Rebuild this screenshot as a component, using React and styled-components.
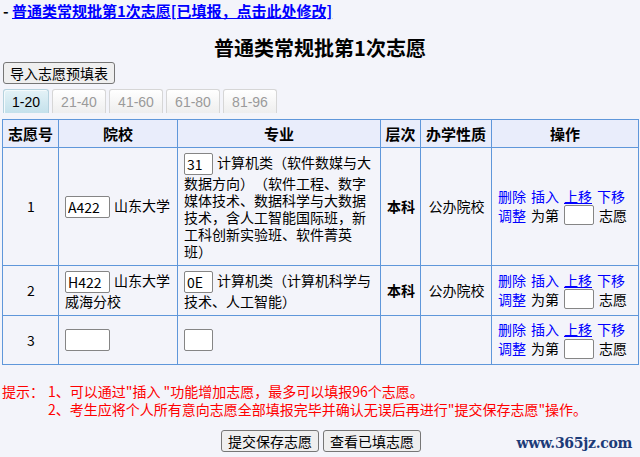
import React from "react";
import styled, { createGlobalStyle, css } from "styled-components";

const GlobalStyle = createGlobalStyle`
  html, body {
    margin: 0;
    padding: 0;
    background: #f3f4fa;
  }
  body {
    font-family: "Noto Sans CJK SC", "Liberation Sans", sans-serif;
    font-size: 14px;
    color: #000;
    text-spacing-trim: space-all;
  }
`;

const Page = styled.div`
  position: relative;
  width: 640px;
  height: 457px;
  overflow: hidden;
`;

const TopLine = styled.div`
  padding-left: 3px;
  height: 21px;
  line-height: 21px;
  font-size: 15px;
  font-weight: bold;
  white-space: nowrap;
`;

const TopLink = styled.a`
  color: #0000ff;
  text-decoration: underline;
  cursor: pointer;
`;

const Title = styled.h2`
  margin: 15px 0 0;
  height: 24px;
  line-height: 24px;
  text-align: center;
  font-size: 20px;
  font-weight: bold;
`;

const Toolbar = styled.div`
  margin-top: 2px;
  padding-left: 3px;
  display: flex;
`;

const PlainButton = styled.button`
  height: 22px;
  box-sizing: border-box;
  padding: 0 6px;
  border: 1px solid #767676;
  border-radius: 3px;
  background: #efefef;
  font-family: "Noto Sans CJK SC", sans-serif;
  font-size: 14px;
  line-height: 18px;
  color: #000;
`;

const Tabs = styled.div`
  display: flex;
  gap: 3px;
  margin-top: 5px;
  padding-left: 3px;
  height: 24px;
`;

const Tab = styled.div`
  box-sizing: border-box;
  width: ${(p) => p.$w}px;
  height: 24px;
  display: flex;
  align-items: center;
  justify-content: center;
  border: 1px solid #d6d6d6;
  border-bottom: none;
  border-radius: 3px 3px 0 0;
  background: linear-gradient(#ffffff, #eeeeee);
  color: #9a9a9a;
  font-family: "Liberation Sans", sans-serif;
  font-size: 14px;
  ${(p) =>
    p.$active &&
    css`
      border-color: #b5d2de;
      background: linear-gradient(#e4f2f7, #c4e1eb);
      color: #000;
      box-shadow: inset 1px 1px 0 #f4fafc;
    `}
`;

const Grid = styled.table`
  margin: 6px 0 0 2px;
  width: 636px;
  table-layout: fixed;
  border-collapse: collapse;
  font-size: 14px;
`;

const Head = styled.th`
  height: 27px;
  padding: 0;
  border: 1px solid #5f97da;
  background: #e9edfb;
  font-size: 15px;
  font-weight: bold;
  text-align: center;
`;

const Cell = styled.td`
  padding: 5px 5px 5px 6px;
  border: 1px solid #5f97da;
  vertical-align: middle;
  text-align: ${(p) => p.$align || "left"};
  line-height: 17px;
  font-weight: ${(p) => (p.$bold ? "bold" : "normal")};
  word-break: break-all;
`;

const CodeBox = styled.input`
  box-sizing: border-box;
  width: ${(p) => p.$w}px;
  height: 22px;
  padding: 1px 2px;
  margin: 0 4px 0 0;
  border: 1px solid #858585;
  border-radius: 2px;
  background: #fff;
  font-family: "Noto Sans CJK SC", sans-serif;
  font-size: 14px;
  color: #000;
  vertical-align: middle;
`;

const OpLine = styled.div`
  display: flex;
  align-items: center;
  gap: 5px;
  white-space: nowrap;
  line-height: 17px;
  min-height: ${(p) => (p.$tall ? 21 : 17)}px;
`;

const OpLink = styled.a`
  color: #0000ff;
  text-decoration: ${(p) => (p.$underline ? "underline" : "none")};
  cursor: pointer;
`;

const OpBox = styled.input`
  box-sizing: border-box;
  width: 30px;
  height: 20px;
  margin: 0;
  border: 1px solid #858585;
  border-radius: 2px;
  background: #fff;
`;

const Tips = styled.div`
  display: flex;
  gap: 4px;
  margin-top: 17px;
  padding-left: 2px;
  color: #ff0000;
  font-size: 14px;
  line-height: 18px;
`;

const TipLabel = styled.div`
  width: 42px;
  flex: none;
`;

const TipList = styled.div`
  display: flex;
  flex-direction: column;
`;

const Footer = styled.div`
  display: flex;
  justify-content: center;
  gap: 4px;
  margin-top: 12px;
  padding-left: 2px;
`;

const SiteMark = styled.div`
  position: absolute;
  right: 8px;
  bottom: 6px;
  font-family: "DejaVu Serif", serif;
  font-weight: bold;
  font-size: 14px;
  color: #1d3b78;
  letter-spacing: -0.3px;
`;

const tabs = [
  { label: "1-20", w: 46 },
  { label: "21-40", w: 54 },
  { label: "41-60", w: 54 },
  { label: "61-80", w: 54 },
  { label: "81-96", w: 54 },
];

const rows = [
  {
    no: 1,
    school: "A422",
    schoolName: "山东大学",
    major: "31",
    majorName:
      "计算机类（软件数媒与大数据方向）（软件工程、数字媒体技术、数据科学与大数据技术，含人工智能国际班，新工科创新实验班、软件菁英班）",
    level: "本科",
    kind: "公办院校",
  },
  {
    no: 2,
    school: "H422",
    schoolName: "山东大学威海分校",
    major: "0E",
    majorName: "计算机类（计算机科学与技术、人工智能）",
    level: "本科",
    kind: "公办院校",
  },
  { no: 3, school: "", schoolName: "", major: "", majorName: "", level: "", kind: "" },
];

function Operations() {
  return (
    <>
      <OpLine>
        <OpLink>删除</OpLink>
        <OpLink>插入</OpLink>
        <OpLink $underline>上移</OpLink>
        <OpLink>下移</OpLink>
      </OpLine>
      <OpLine $tall>
        <OpLink>调整</OpLink>
        <span>为第</span>
        <OpBox readOnly />
        <span>志愿</span>
      </OpLine>
    </>
  );
}

export default function App() {
  return (
    <Page>
      <GlobalStyle />
      <TopLine>
        - <TopLink>普通类常规批第1次志愿[已填报，点击此处修改]</TopLink>
      </TopLine>
      <Title>普通类常规批第1次志愿</Title>
      <Toolbar>
        <PlainButton>导入志愿预填表</PlainButton>
      </Toolbar>
      <Tabs>
        {tabs.map((t, i) => (
          <Tab key={t.label} $w={t.w} $active={i === 0}>
            {t.label}
          </Tab>
        ))}
      </Tabs>
      <Grid>
        <colgroup>
          <col style={{ width: 56 }} />
          <col style={{ width: 119 }} />
          <col style={{ width: 203 }} />
          <col style={{ width: 40 }} />
          <col style={{ width: 71 }} />
          <col style={{ width: 147 }} />
        </colgroup>
        <thead>
          <tr>
            <Head>志愿号</Head>
            <Head>院校</Head>
            <Head>专业</Head>
            <Head>层次</Head>
            <Head>办学性质</Head>
            <Head>操作</Head>
          </tr>
        </thead>
        <tbody>
          {rows.map((r) => (
            <tr key={r.no}>
              <Cell $align="center">{r.no}</Cell>
              <Cell>
                <CodeBox $w={45} value={r.school} readOnly />
                {r.schoolName}
              </Cell>
              <Cell>
                <CodeBox $w={29} value={r.major} readOnly />
                {r.majorName}
              </Cell>
              <Cell $align="center" $bold>
                {r.level}
              </Cell>
              <Cell $align="center">{r.kind}</Cell>
              <Cell>
                <Operations />
              </Cell>
            </tr>
          ))}
        </tbody>
      </Grid>
      <Tips>
        <TipLabel>提示：</TipLabel>
        <TipList>
          <div>1、可以通过"插入 "功能增加志愿，最多可以填报96个志愿。</div>
          <div>2、考生应将个人所有意向志愿全部填报完毕并确认无误后再进行"提交保存志愿"操作。</div>
        </TipList>
      </Tips>
      <Footer>
        <PlainButton>提交保存志愿</PlainButton>
        <PlainButton>查看已填志愿</PlainButton>
      </Footer>
      <SiteMark>www.365jz.com</SiteMark>
    </Page>
  );
}
